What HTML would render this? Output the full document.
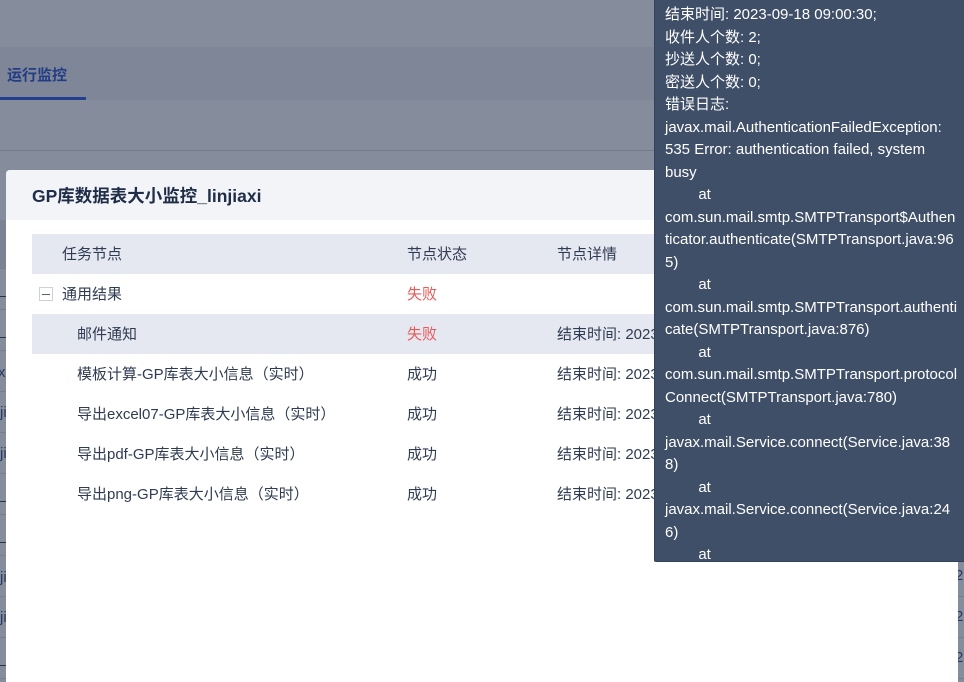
<!DOCTYPE html>
<html lang="zh"><head><meta charset="utf-8"><title>GP库数据表大小监控</title>
<style>
html,body{margin:0;padding:0}
body{width:964px;height:682px;position:relative;overflow:hidden;background:#858d9d;font:15px/20px "Liberation Sans","Noto Sans CJK SC",sans-serif;color:#2f3b52}
.a{position:absolute}
.t{position:absolute;white-space:nowrap;line-height:20px}
.l{position:absolute;height:1px;left:0;width:6px;background:#767e8f}
.d{position:absolute;height:1px;left:0;width:6px;background:#26344f}
.r{position:absolute;height:1px;left:958px;width:6px;background:#767e8f}
.s{position:absolute;white-space:nowrap;line-height:20px;color:#2a3a5e}
#tip{position:absolute;left:654px;top:-1px;width:310px;height:563px;box-sizing:border-box;background:#3f4f68;border-left:1px solid #33415a;border-bottom:1px solid #33415a;border-bottom-left-radius:2px;overflow:hidden;color:#fff}
#tip div{position:absolute;left:10px;top:5px;white-space:pre;line-height:22.5px;font-size:15px}
</style></head>
<body>
<div class="a" style="left:0;top:47px;width:964px;height:53px;background:#7e8697"></div>
<div class="a" style="left:0;top:97px;width:86px;height:3px;background:#233f8f"></div>
<div class="t" style="left:7px;top:66px;color:#233c86;font-weight:bold">运行监控</div>
<div class="a" style="left:0;top:150px;width:964px;height:1px;background:#737b8c"></div>
<div class="a" style="left:0;top:220px;width:6px;height:48px;background:#7a8294"></div>

<div class="l" style="top:268px"></div><div class="l" style="top:309px"></div><div class="l" style="top:350px"></div><div class="l" style="top:391px"></div><div class="l" style="top:432px"></div><div class="l" style="top:473px"></div><div class="l" style="top:514px"></div><div class="l" style="top:555px"></div><div class="l" style="top:596px"></div><div class="l" style="top:637px"></div><div class="l" style="top:678px"></div>
<div class="d" style="top:296px"></div><div class="d" style="top:337px"></div><div class="d" style="top:501px"></div><div class="d" style="top:542px"></div><div class="d" style="top:665px"></div>
<div class="s" style="left:-2px;top:363px;">x</div>
<div class="s" style="left:0;top:403px;">ji</div>
<div class="s" style="left:0;top:444px;">ji</div>
<div class="s" style="left:0;top:568px;">ji</div>
<div class="s" style="left:0;top:608px;">ji</div>

<div class="r" style="top:596px"></div><div class="r" style="top:637px"></div><div class="r" style="top:678px"></div>
<div class="s" style="left:955px;top:566px">23</div>
<div class="s" style="left:955px;top:607px">23</div>
<div class="s" style="left:955px;top:648px">23</div>

<div class="a" style="left:6px;top:170px;width:952px;height:512px;background:#fff;border-radius:4px 4px 0 0;overflow:hidden">
  <div class="a" style="left:0;top:0;width:952px;height:50px;background:#f2f4f8"></div>
  <div class="t" style="left:26px;top:16px;font-size:17.5px;font-weight:bold;color:#1f2d47;line-height:20px">GP库数据表大小监控_linjiaxi</div>
  <div class="a" style="left:26px;top:64px;width:900px;height:40px;background:#e5e8f0"></div>
  <div class="a" style="left:26px;top:144px;width:900px;height:40px;background:#e5e8f0"></div>
</div>

<div class="t" style="left:62px;top:245px">任务节点</div>
<div class="t" style="left:407px;top:245px">节点状态</div>
<div class="t" style="left:557px;top:245px">节点详情</div>

<div class="a" style="left:39px;top:287px;width:14px;height:14px;box-sizing:border-box;border:1px solid #cdd1dc;background:#fff"></div>
<div class="a" style="left:42px;top:294px;width:8px;height:1px;background:#5a6478"></div>

<div class="t" style="left:62px;top:285px">通用结果</div>
<div class="t" style="left:407px;top:285px;color:#e85a5a">失败</div>

<div class="t" style="left:77px;top:325px">邮件通知</div>
<div class="t" style="left:407px;top:325px;color:#e85a5a">失败</div>
<div class="t" style="left:557px;top:325px">结束时间: 2023-09-18 09:00:30;</div>

<div class="t" style="left:77px;top:365px">模板计算-GP库表大小信息（实时）</div>
<div class="t" style="left:407px;top:365px">成功</div>
<div class="t" style="left:557px;top:365px">结束时间: 2023-09-18 09:00:30;</div>

<div class="t" style="left:77px;top:405px">导出excel07-GP库表大小信息（实时）</div>
<div class="t" style="left:407px;top:405px">成功</div>
<div class="t" style="left:557px;top:405px">结束时间: 2023-09-18 09:00:30;</div>

<div class="t" style="left:77px;top:445px">导出pdf-GP库表大小信息（实时）</div>
<div class="t" style="left:407px;top:445px">成功</div>
<div class="t" style="left:557px;top:445px">结束时间: 2023-09-18 09:00:30;</div>

<div class="t" style="left:77px;top:485px">导出png-GP库表大小信息（实时）</div>
<div class="t" style="left:407px;top:485px">成功</div>
<div class="t" style="left:557px;top:485px">结束时间: 2023-09-18 09:00:30;</div>

<div id="tip"><div>结束时间: 2023-09-18 09:00:30;
收件人个数: 2;
抄送人个数: 0;
密送人个数: 0;
错误日志:
javax.mail.AuthenticationFailedException:
535 Error: authentication failed, system
busy
        at
com.sun.mail.smtp.SMTPTransport$Authen
ticator.authenticate(SMTPTransport.java:96
5)
        at
com.sun.mail.smtp.SMTPTransport.authenti
cate(SMTPTransport.java:876)
        at
com.sun.mail.smtp.SMTPTransport.protocol
Connect(SMTPTransport.java:780)
        at
javax.mail.Service.connect(Service.java:38
8)
        at
javax.mail.Service.connect(Service.java:24
6)
        at</div></div>
</body></html>
